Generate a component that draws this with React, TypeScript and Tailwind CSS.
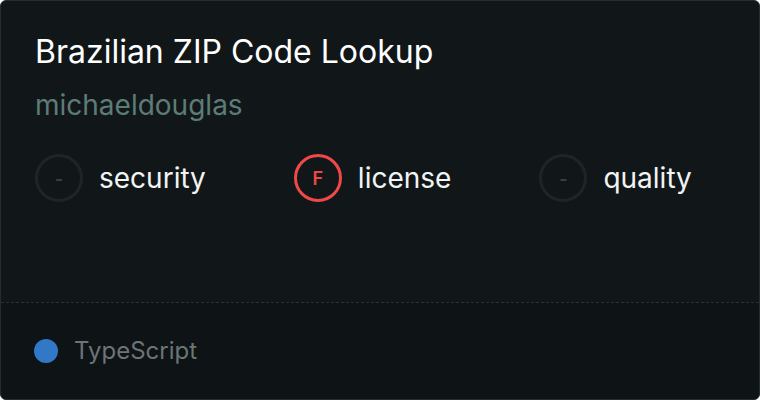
import React from 'react';

type Score = { label: string; grade: string; failed?: boolean };

const scores: Score[] = [
  { label: 'security', grade: '-' },
  { label: 'license', grade: 'F', failed: true },
  { label: 'quality', grade: '-' },
];

const ScoreBadge: React.FC<Score> = ({ label, grade, failed }) => (
  <div className="flex items-center gap-[16px]">
    <div
      className={`w-[48px] h-[48px] rounded-full border-[3px] flex items-center justify-center text-[18px] font-semibold ${
        failed ? 'border-[#f04848] text-[#f04848]' : 'border-[#1f2527] text-[#3a4143]'
      }`}
    >
      {grade}
    </div>
    <span className="text-[28px] text-[#f2f4f4] leading-none">{label}</span>
  </div>
);

export default function App() {
  return (
    <div className="w-[760px] h-[400px] bg-white" style={{ fontFamily: 'Inter, "Noto Sans", sans-serif' }}>
      <div className="w-full h-full rounded-[6px] border border-[#262c2e] bg-[#111719] flex flex-col overflow-hidden">
        <div className="flex-1 px-[34px] pt-[31px]">
          <h1 className="text-[32px] leading-[40px] text-white">Brazilian ZIP Code Lookup</h1>
          <div className="mt-[16px] text-[28px] leading-[34px] text-[#5e7c76]">michaeldouglas</div>
          <div className="mt-[32px] flex gap-[88px]">
            {scores.map(s => (
              <ScoreBadge key={s.label} {...s} />
            ))}
          </div>
        </div>
        <div className="h-[97px] border-t border-dashed border-[#2a3133] bg-[#0e1315] flex items-center px-[33px] gap-[16px]">
          <span className="w-[24px] h-[24px] rounded-full bg-[#3178c6]" />
          <span className="text-[24px] text-[#6c7476]">TypeScript</span>
        </div>
      </div>
    </div>
  );
}
